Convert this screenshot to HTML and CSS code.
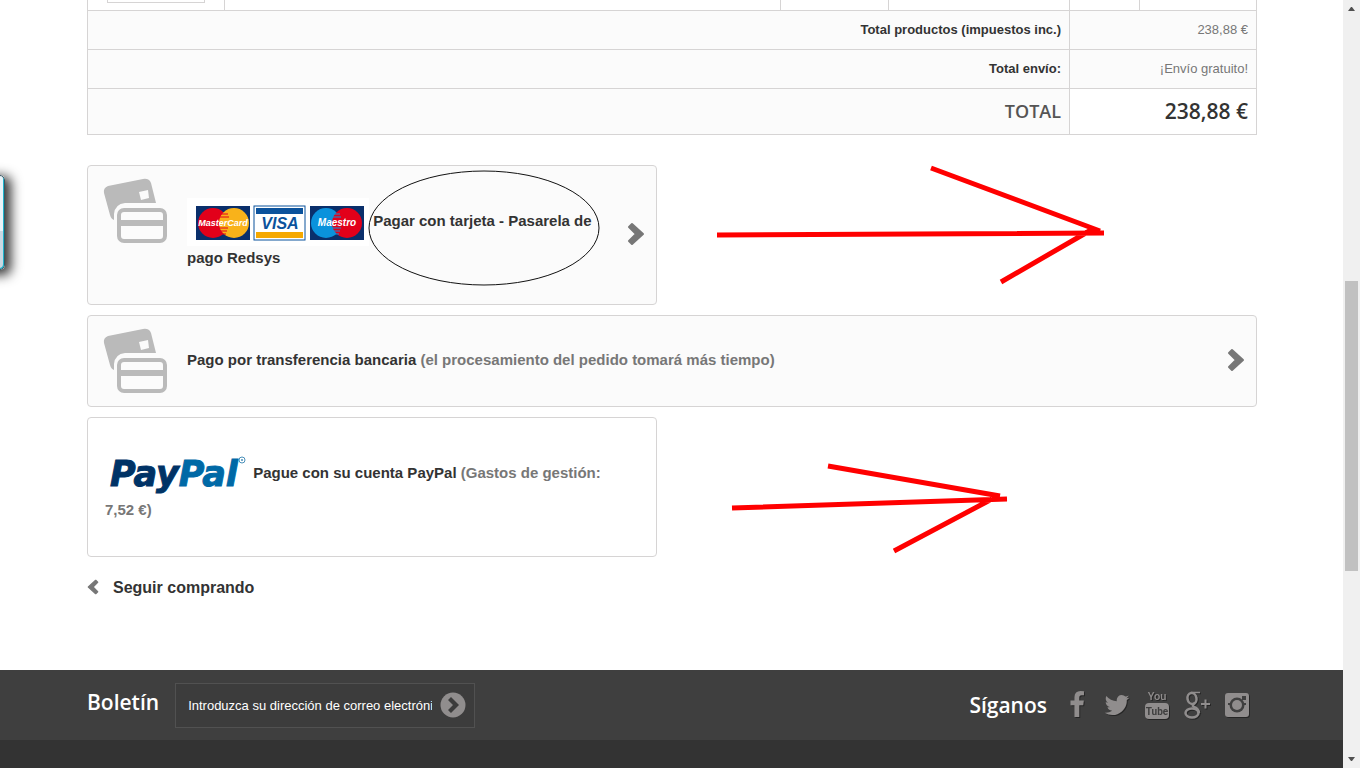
FILE: index.html
```html
<!DOCTYPE html>
<html lang="es">
<head>
    <meta charset="UTF-8">
    <meta name="viewport" content="width=device-width, initial-scale=1.0">
    <title>Forma de pago</title>
    <link rel="stylesheet" href="styles.css">
</head>
<body>
    <!-- shared icons -->
    <svg class="defs" width="0" height="0" aria-hidden="true">
        <symbol id="icon-cards" viewBox="0 0 66 66">
            <path fill="#bababa" fill-rule="evenodd" d="M1 15Q0 10 5 8L40 1Q46 0 48 5L53 25H22Q12 26 11 36V42Q8 41 7 37ZM36 14L38 22L46 20L45 12Z"/>
            <rect x="16" y="32" width="46" height="31" rx="5" fill="none" stroke="#bababa" stroke-width="4"/>
            <path fill="#bababa" d="M16 42h46v6H16z"/>
        </symbol>
        <symbol id="icon-chevron" viewBox="0 0 18 24">
            <path fill="currentColor" stroke="currentColor" stroke-width="2" stroke-linejoin="round" d="M5 2L16 12L5 22L2 19L9 12L2 5Z"/>
        </symbol>
    </svg>

    <div class="page">
        <main class="container">
            <table class="cart">
                <colgroup>
                    <col class="col-photo">
                    <col>
                    <col class="col-ref">
                    <col class="col-price">
                    <col class="col-qty">
                    <col class="col-total">
                </colgroup>
                <tbody>
                    <tr class="product">
                        <td><div class="photo"></div></td>
                        <td></td>
                        <td></td>
                        <td></td>
                        <td></td>
                        <td></td>
                    </tr>
                </tbody>
                <tfoot>
                    <tr>
                        <th colspan="4" scope="row">Total productos (impuestos inc.)</th>
                        <td colspan="2">238,88 €</td>
                    </tr>
                    <tr>
                        <th colspan="4" scope="row">Total envío:</th>
                        <td colspan="2">¡Envío gratuito!</td>
                    </tr>
                    <tr class="grand-total">
                        <th colspan="4" scope="row">TOTAL</th>
                        <td colspan="2">238,88 €</td>
                    </tr>
                </tfoot>
            </table>

            <div class="payments">
                <div class="payment-row">
                    <a class="payment half" href="#">
                        <svg class="cards"><use href="#icon-cards"/></svg>
                        <svg class="inline-logo" width="182" height="48" viewBox="0 -1 182 48" role="img" aria-label="MasterCard, Visa, Maestro">
                            <rect y="-1" width="182" height="48" fill="#fff"/>
                            <g font-family="'Liberation Sans', Arial, sans-serif" font-weight="700" font-style="italic" text-anchor="middle">
                                <rect x="9" y="7" width="54" height="34" fill="#0a2f6b"/>
                                <circle cx="26" cy="24" r="15" fill="#e2001a"/>
                                <circle cx="47" cy="24" r="15" fill="#f9b21a"/>
                                <path stroke="#e2001a" d="M34 15h7M33 18h9M32 29h9M33 32h7M35 35h4"/>
                                <text x="36" y="27" font-size="9" fill="#fff">MasterCard</text>
                                <rect x="67" y="7" width="51" height="34" fill="#fff" stroke="#0b529c"/>
                                <path fill="#0b529c" d="M69 9h47v6H69z"/>
                                <path fill="#f5a800" d="M69 33h47v6H69z"/>
                                <text x="93" y="30" font-size="16" fill="#0b529c">VISA</text>
                                <rect x="123" y="7" width="54" height="34" fill="#0a2f6b"/>
                                <circle cx="139" cy="24" r="15" fill="#0a92dc"/>
                                <circle cx="160" cy="24" r="15" fill="#e2001a"/>
                                <path stroke="#0a92dc" d="M146 15h7M145 18h9M145 29h9M146 32h7M148 35h4"/>
                                <text x="150" y="27" font-size="10" fill="#fff">Maestro</text>
                            </g>
                        </svg>
                        Pagar con tarjeta - Pasarela de pago Redsys
                        <svg class="chevron"><use href="#icon-chevron"/></svg>
                    </a>
                    <svg class="ellipse" viewBox="0 0 232 117" aria-hidden="true">
                        <ellipse cx="116" cy="58" rx="115" ry="57" fill="none" stroke="#111"/>
                    </svg>
                    <svg class="arrow arrow-card" viewBox="0 0 390 122" aria-hidden="true">
                        <path d="M1 71L388 69M215 4L384 67M285 118L375 66"/>
                    </svg>
                </div>

                <div class="payment-row">
                    <a class="payment" href="#">
                        <svg class="cards"><use href="#icon-cards"/></svg>
                        Pago por transferencia bancaria <span>(el procesamiento del pedido tomará más tiempo)</span>
                        <svg class="chevron"><use href="#icon-chevron"/></svg>
                    </a>
                </div>

                <div class="payment-row">
                    <a class="payment half paypal" href="#">
                        <svg class="inline-logo" width="144" height="48" viewBox="0 0 144 48" role="img" aria-label="PayPal">
                            <g font-family="'DejaVu Sans', Verdana, sans-serif" font-size="35" font-weight="700" font-style="italic">
                                <text x="5" y="36" fill="#003366" stroke="#003366">Pay<tspan fill="#0069a6" stroke="#0069a6">Pal</tspan></text>
                            </g>
                            <circle cx="137" cy="10" r="3" fill="none" stroke="#4a90ba"/>
                            <circle cx="137" cy="10" r="1" fill="#4a90ba"/>
                        </svg>
                        Pague con su cuenta PayPal <span>(Gastos de gestión: 7,52 €)</span>
                    </a>
                    <svg class="arrow arrow-paypal" viewBox="0 0 280 92" aria-hidden="true">
                        <path d="M2 46L277 37M98 4L270 34M164 89L262 37"/>
                    </svg>
                </div>
            </div>

            <a class="back" href="#">
                <svg><use href="#icon-chevron"/></svg>
                Seguir comprando
            </a>
        </main>

        <footer>
            <div class="container footer-bar">
                <form class="newsletter">
                    <label for="email">Boletín</label>
                    <div class="field">
                        <input type="text" id="email" placeholder="Introduzca su dirección de correo electrónico">
                        <button type="button" aria-label="Suscribirse">
                            <svg width="26" height="26" viewBox="0 0 26 26">
                                <circle cx="13" cy="13" r="12.5" fill="#908d8d"/>
                                <path fill="#3c3c3c" d="M11 5L19 13L11 21L8 18L13 13L8 8Z"/>
                            </svg>
                        </button>
                    </div>
                </form>
                <section class="social">
                    <h4>Síganos</h4>
                    <a href="#" aria-label="Facebook">
                        <svg viewBox="0 0 1792 1792"><path d="M1343 12v264h-157q-86 0-116 36t-30 108v189h293l-39 296h-254v759h-306v-759h-255v-296h255v-218q0-186 104-288.500t277-102.500q147 0 228 12z"/></svg>
                    </a>
                    <a href="#" aria-label="Twitter">
                        <svg viewBox="0 0 1792 1792"><path d="M1684 408q-67 98-162 167 1 14 1 42 0 130-38 259.500t-115.500 248.500-184.500 210.500-258 146-323 54.500q-271 0-496-145 35 4 78 4 225 0 401-138-105-2-188-64.500t-114-159.500q33 5 61 5 43 0 85-11-112-23-185.500-111.500t-73.500-205.500v-4q68 38 146 41-66-44-105-115t-39-154q0-88 44-163 121 149 294.500 238.500t371.500 99.500q-8-38-8-74 0-134 94.500-228.500t228.500-94.500q140 0 236 102 109-21 205-78-37 115-142 178 93-10 186-50z"/></svg>
                    </a>
                    <a href="#" aria-label="YouTube">
                        <svg viewBox="0 0 28 28">
                            <g font-family="Roboto, sans-serif" text-anchor="middle">
                                <text x="14" y="9" font-size="11" font-weight="500">You</text>
                                <rect x="2" y="12" width="24" height="16" rx="4"/>
                                <text x="14" y="24" font-size="10" font-weight="700" class="cut">Tube</text>
                            </g>
                        </svg>
                    </a>
                    <a href="#" aria-label="Google Plus">
                        <svg viewBox="0 0 28 28">
                            <g fill="none" stroke="#908d8d">
                                <path stroke-width="1.5" d="M8 1.5H17"/>
                                <ellipse cx="9" cy="7.5" rx="4.5" ry="5.5" stroke-width="2.5" transform="rotate(-10 9 7.5)"/>
                                <path stroke-width="2.5" d="M12 12Q8 14 11 16Q16 18 16 22"/>
                                <ellipse cx="9" cy="22" rx="6.5" ry="4.5" stroke-width="2.5"/>
                                <path stroke-width="2" d="M18 13h9M22.5 8.5v9"/>
                            </g>
                        </svg>
                    </a>
                    <a href="#" aria-label="Instagram">
                        <svg viewBox="0 0 28 28">
                            <rect x="2" y="2" width="24" height="24" rx="3"/>
                            <path class="cut" d="M19 5h4v4h-4zM5 12h4v2H5zM19 12h4v2h-4z"/>
                            <circle class="cut" cx="14" cy="14" r="7.5"/>
                            <circle cx="14" cy="14" r="5"/>
                        </svg>
                    </a>
                </section>
            </div>
        </footer>
    </div>

    <div class="side-tab"></div>

    <div class="scrollbar" aria-hidden="true">
        <svg viewBox="0 0 17 17"><path d="M5 11L8 7H9L12 11Z"/></svg>
        <div class="before"></div>
        <div class="thumb"></div>
        <div class="after"></div>
        <svg viewBox="0 0 17 17"><path d="M5 6H12L9 10H8Z"/></svg>
    </div>
</body>
</html>
```
FILE: styles.css
```css
* {
    box-sizing: border-box;
}
body {
    margin: 0;
    display: flex;
    height: 100vh;
    overflow: hidden;
    background: #fff;
    color: #777;
    font: 13px/18px "Liberation Sans", Arial, sans-serif;
}
a {
    color: #333;
    text-decoration: none;
}
.defs {
    position: absolute;
}
.page {
    flex: 1;
    display: flex;
    flex-direction: column;
    overflow: hidden;
}
.container {
    width: 100%;
    max-width: 1171px;
    margin: 0 auto;
    padding-left: 1px;
}

/* cart summary */
.cart {
    width: 100%;
    table-layout: fixed;
    border-collapse: collapse;
    margin-bottom: 30px;
}
.col-photo {
    width: 137px;
}
.col-ref {
    width: 108px;
}
.col-price {
    width: 181px;
}
.col-qty {
    width: 70px;
}
.col-total {
    width: 117px;
}
.cart th,
.cart td {
    border: 1px solid #d6d4d4;
    padding: 0 8px;
    height: 39px;
    text-align: right;
}
.cart .product td {
    height: 10px;
    padding: 0 19px;
    border-top: none;
    vertical-align: top;
}
.photo {
    height: 3px;
    border: 1px solid #d6d4d4;
    border-top: none;
}
.cart tfoot th,
.cart tfoot td {
    background: #fbfbfb;
}
.cart tfoot th {
    color: #333;
}
.cart .grand-total th,
.cart .grand-total td {
    height: 46px;
    font-family: "Open Sans", sans-serif;
}
.cart .grand-total th {
    color: #555454;
    font-size: 18px;
    font-weight: 600;
}
.cart .grand-total td {
    background: #fff;
    color: #333;
    font-size: 21px;
    font-weight: 600;
}

/* payment methods */
.payment-row {
    position: relative;
    margin-bottom: 10px;
}
.payment {
    position: relative;
    display: block;
    padding: 32px 40px 35px 99px;
    border: 1px solid #d6d4d4;
    border-radius: 4px;
    background: #fbfbfb;
    font-size: 15px;
    font-weight: bold;
    line-height: 23px;
}
.payment.half {
    width: calc(50% - 15px);
}
.payment.paypal {
    padding-left: 17px;
    background: #fff;
}
.payment span {
    color: #777;
}
.inline-logo {
    vertical-align: middle;
}
.cards {
    position: absolute;
    left: 15px;
    top: 12px;
    width: 66px;
    height: 66px;
}
.chevron {
    position: absolute;
    right: 11px;
    top: 50%;
    width: 18px;
    height: 24px;
    margin-top: -13px;
    color: #777;
}

/* marks drawn over the page */
.ellipse {
    position: absolute;
    left: 281px;
    top: 5px;
    width: 232px;
    height: 117px;
}
.arrow {
    position: absolute;
    fill: none;
    stroke: #f00;
    stroke-width: 5;
}
.arrow-card {
    left: 629px;
    top: -1px;
    width: 390px;
    height: 122px;
}
.arrow-paypal {
    left: 643px;
    top: 45px;
    width: 280px;
    height: 92px;
}

.back {
    display: inline-flex;
    align-items: center;
    gap: 14px;
    margin: 10px 0 72px;
    font-size: 16px;
    font-weight: bold;
    line-height: 21px;
}
.back svg {
    width: 12px;
    height: 16px;
    color: #777;
    transform: scaleX(-1);
}

/* footer */
footer {
    flex: 1;
    background: linear-gradient(#3f3f3f 70px, #333 70px);
}
.footer-bar {
    display: flex;
    justify-content: space-between;
    align-items: center;
    height: 70px;
    padding-top: 1px;
}
.newsletter {
    display: flex;
    align-items: center;
    gap: 16px;
}
.newsletter label,
.social h4 {
    margin: 0;
    color: #fff;
    font: 600 21px/25px "Open Sans", sans-serif;
}
.newsletter label {
    padding-bottom: 5px;
}
.field {
    display: flex;
    align-items: center;
    width: 300px;
    height: 45px;
    padding: 0 8px 0 12px;
    border: 1px solid #515151;
    background: #3c3c3c;
}
.field input {
    flex: 1;
    min-width: 0;
    margin-right: 8px;
    padding: 0;
    border: none;
    outline: none;
    background: none;
    color: #fff;
    font: 13px "Liberation Sans", Arial, sans-serif;
}
.field input::placeholder {
    color: #fff;
    opacity: 1;
}
.field button {
    padding: 0;
    border: none;
    background: none;
    cursor: pointer;
}
.field svg {
    display: block;
}
.social {
    display: flex;
    align-items: center;
}
.social h4 {
    margin-right: 10px;
}
.social a {
    display: flex;
    justify-content: center;
    width: 40px;
}
.social svg {
    width: 28px;
    height: 28px;
    overflow: visible;
    fill: #908d8d;
    filter: drop-shadow(1px 1px 0 rgba(0, 0, 0, 0.4));
}
.social .cut {
    fill: #3f3f3f;
}

/* tab peeking in from the left edge */
.side-tab {
    position: fixed;
    left: -20px;
    top: 175px;
    width: 25px;
    height: 95px;
    border: 1px solid #3a5560;
    border-radius: 5px;
    background: linear-gradient(#eaf3f8 55px, #c9d8e2 55px);
    box-shadow: inset -1px -1px 0 #1fb4cc, 4px 3px 12px 2px rgba(0, 0, 0, 0.8);
}

.scrollbar {
    display: flex;
    flex-direction: column;
    width: 17px;
    background: #f0f0f0;
}
.scrollbar svg {
    width: 17px;
    height: 17px;
    fill: #505050;
}
.before {
    flex: 264;
}
.thumb {
    flex: 290;
    margin: 0 2px;
    background: #c1c1c1;
}
.after {
    flex: 180;
}
```
